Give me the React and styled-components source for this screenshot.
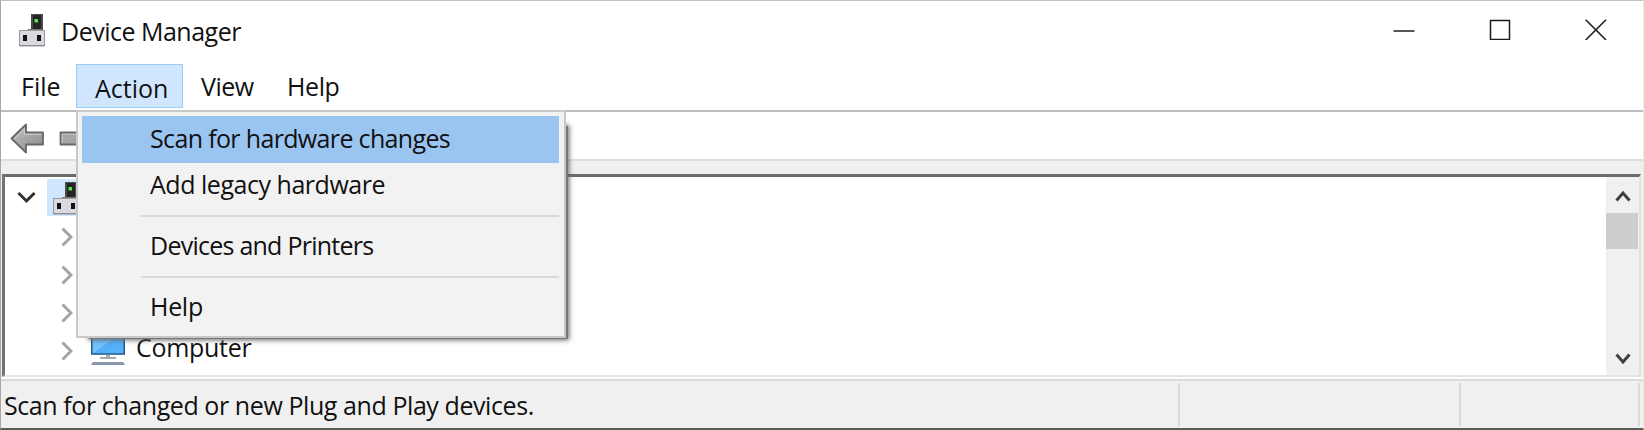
import React from "react";
import styled, { createGlobalStyle, css } from "styled-components";

const GlobalStyle = createGlobalStyle`
  * { box-sizing: border-box; }
  body { margin: 0; background: #fff; font-family: "Open Sans", "Noto Sans", sans-serif; font-size: 25px; color: #111; }
  svg { display: block; flex: none; }
`;

const Label = styled.span`
  display: block;
  white-space: pre;
  line-height: 34px;
  letter-spacing: ${(p) => p.$track || 0}px;
`;

const Window = styled.main`
  position: relative;
  width: 1644px;
  height: 430px;
  display: flex;
  flex-direction: column;
  overflow: hidden;
  border-top: 1px solid #c2c2c2;
  border-left: 1px solid #a6a6a6;
  border-right: 1px solid #ececec;
  border-bottom: 2px solid #5a5a5a;
`;

const TitleBar = styled.header`
  height: 63px;
  flex: none;
  display: flex;
  align-items: flex-start;
  justify-content: space-between;
  padding: 12px 36px 0 17px;
`;

const TitleGroup = styled.div`
  display: flex;
  gap: 15px;
`;

const TitleText = styled.div`
  padding-top: 1px;
`;

const WindowControls = styled.div`
  display: flex;
  gap: 74px;
  padding: 5px 0 0;
`;

const MenuBar = styled.nav`
  height: 46px;
  flex: none;
  display: flex;
  align-items: flex-start;
`;

const MenuBarItem = styled.div`
  width: ${(p) => p.$width}px;
  height: 44px;
  padding: ${(p) => (p.$open ? 6 : 5)}px 0 0 ${(p) => p.$inset}px;
  ${(p) => p.$open && css`
    background: #d0e6ff;
    border: 1px solid #99cdfb;
  `}
`;

const Toolbar = styled.div`
  height: 51px;
  flex: none;
  display: flex;
  align-items: flex-start;
  gap: 14px;
  padding: 11px 0 0 9px;
  border-top: 2px solid #bcbcbe;
  border-bottom: 2px solid #dedede;
`;

const Body = styled.section`
  height: 218px;
  flex: none;
  background: #f0f0f0;
  padding: 13px 2px 0 1px;
  border-bottom: 2px solid #fdfdfd;
`;

const TreePane = styled.div`
  height: 203px;
  display: flex;
  background: #fff;
  border-top: 3px solid #6b6b6b;
  border-left: 3px solid #737373;
  border-right: 2px solid #e2e2e2;
  border-bottom: 2px solid #e4e4e4;
`;

const Tree = styled.div`
  flex: 1;
  padding-top: 1px;
`;

const RootRow = styled.div`
  height: 38px;
  margin-bottom: 2px;
  display: flex;
  align-items: center;
  gap: 11px;
  padding-left: 12px;
`;

const RootSelection = styled.div`
  width: 40px;
  height: 37px;
  background: #cfe6ff;
  padding: 2px 0 0 5px;
`;

const NodeRow = styled.div`
  height: 38px;
  display: flex;
  align-items: center;
  padding-left: 56px;
`;

const NodeIcon = styled.div`
  height: 44px;
  margin: 0 10px 0 17px;
`;

const NodeText = styled.div`
  height: 42px;
`;

const ScrollBar = styled.div`
  width: 33px;
  background: #f0f0f0;
  display: flex;
  flex-direction: column;
  align-items: center;
`;

const ScrollButton = styled.div`
  height: 36px;
  flex: none;
  padding-top: ${(p) => p.$top}px;
`;

const ScrollThumb = styled.div`
  width: 32px;
  height: 36px;
  margin-bottom: auto;
  align-self: flex-start;
  background: #cdcdcd;
`;

const StatusBar = styled.footer`
  flex: 1;
  display: flex;
  background: #f0f0f0;
  border-top: 2px solid #dadada;
  padding: 2px 3px 2px 0;
`;

const StatusPane = styled.div`
  width: ${(p) => p.$width}px;
  padding: 5px 0 0 3px;
  border-right: 2px solid #d9d9d9;
`;

const Dropdown = styled.div`
  position: absolute;
  left: 75px;
  top: 109px;
  width: 490px;
  height: 228px;
  padding: 4px 5px 0 4px;
  background: #f2f2f2;
  border: 2px solid #c8c8c8;
  display: flex;
  flex-direction: column;
`;

const DropdownShadow = styled.div`
  position: absolute;
  left: 88px;
  top: 125px;
  width: 479px;
  height: 213px;
  background: #777;
  box-shadow: 0 0 5px 1px #666;
`;

const DropdownItem = styled.div`
  height: ${(p) => p.$height}px;
  flex: none;
  padding: ${(p) => p.$top}px 0 0 68px;
  ${(p) => p.$selected && css`background: #9bc5f1;`}
`;

const Separator = styled.div`
  height: 2px;
  flex: none;
  margin-left: 59px;
  background: #d8d8d8;
`;

const DeviceIcon = () => (
  <svg width="28" height="34" viewBox="0 0 28 34">
    <rect x="13" y="1" width="12" height="17" fill="#4b4b4b" />
    <rect x="15" y="2" width="8" height="14" fill="#242424" />
    <rect x="16.5" y="6" width="3.5" height="3.5" fill="#54e645" />
    <path d="M10 16H24V18H27V33H1V18H9Z" fill="#d9dadd" />
    <path d="M1.5 17.5H26.5V33H1.5Z" fill="none" stroke="#97999d" />
    <path d="M10 16.5H24" stroke="#777" />
    <path d="M2 32.5H27" stroke="#8c8e92" />
    <rect x="5" y="22" width="4" height="6" fill="#111" />
    <rect x="19" y="22" width="4" height="6" fill="#111" />
  </svg>
);

const BackArrow = () => (
  <svg width="35" height="32" viewBox="0 0 35 32">
    <defs>
      <linearGradient id="arrowFill" x2="1" y2="1">
        <stop stopColor="#c4c4c4" />
        <stop offset="1" stopColor="#888" />
      </linearGradient>
    </defs>
    <path d="M1.5 15.5 16 1.5V9.5H33V21.5H16V29.5Z" fill="url(#arrowFill)" stroke="#686868" strokeWidth="1.8" strokeLinejoin="round" />
    <path d="M4.5 15.5 14.3 6V11.2H31.2" fill="none" stroke="#d0d0d0" strokeWidth="1" />
  </svg>
);

const ForwardArrow = () => (
  <svg width="35" height="32" viewBox="0 0 35 32">
    <path d="M1.5 9.5H19V1.5L33 15.5 19 29.5V21.5H1.5Z" fill="#a5a5a5" stroke="#686868" strokeWidth="1.8" strokeLinejoin="round" />
    <path d="M3.2 19.8V11.2H20" fill="none" stroke="#cacaca" strokeWidth="1" />
  </svg>
);

const MonitorIcon = () => (
  <svg width="36" height="36" viewBox="0 0 36 36">
    <defs>
      <linearGradient id="screen" x2="1" y2="1">
        <stop stopColor="#6fc0fb" />
        <stop offset=".5" stopColor="#72c1fb" />
        <stop offset=".52" stopColor="#51aef8" />
        <stop offset="1" stopColor="#58b4fb" />
      </linearGradient>
    </defs>
    <rect x="1.8" y="1" width="32.4" height="24" fill="url(#screen)" stroke="#285f91" strokeWidth="1.6" />
    <path d="M16 26H20V28H26V30H10V28H16Z" fill="#a2abb5" />
    <path d="M3 33H33L35 36H1Z" fill="#8998ab" />
  </svg>
);

const MinimizeIcon = () => (
  <svg width="22" height="22" viewBox="0 0 22 22"><path d="M.5 13H21.5" stroke="#555" strokeWidth="2" /></svg>
);
const MaximizeIcon = () => (
  <svg width="22" height="22" viewBox="0 0 22 22"><rect x="1.5" y="2.5" width="19" height="19" fill="none" stroke="#1a1a1a" strokeWidth="1.5" /></svg>
);
const CloseIcon = () => (
  <svg width="22" height="22" viewBox="0 0 22 22"><path d="M.7 1.8 21 22M21 1.8.7 22" stroke="#222" strokeWidth="1.6" /></svg>
);

const Chevron = ({ d, width, height, color }) => (
  <svg width={width} height={height} viewBox={`0 0 ${width} ${height}`}>
    <path d={d} fill="none" stroke={color} strokeWidth="3" />
  </svg>
);
const ExpandChevron = () => <Chevron width={12} height={20} d="M1.5 1.5 10 10 1.5 18.5" color="#a4a4a4" />;

export default function App() {
  return (
    <>
      <GlobalStyle />
      <Window>
        <TitleBar>
          <TitleGroup>
            <DeviceIcon />
            <TitleText><Label $track={-0.5}>Device Manager</Label></TitleText>
          </TitleGroup>
          <WindowControls>
            <MinimizeIcon />
            <MaximizeIcon />
            <CloseIcon />
          </WindowControls>
        </TitleBar>
        <MenuBar>
          <MenuBarItem $width={75} $inset={20}><Label>File</Label></MenuBarItem>
          <MenuBarItem $width={107} $inset={18} $open><Label>Action</Label></MenuBarItem>
          <MenuBarItem $width={87} $inset={18}><Label $track={-0.5}>View</Label></MenuBarItem>
          <MenuBarItem $width={90} $inset={17}><Label $track={-0.4}>Help</Label></MenuBarItem>
        </MenuBar>
        <Toolbar>
          <BackArrow />
          <ForwardArrow />
        </Toolbar>
        <Body>
          <TreePane>
            <Tree>
              <RootRow>
                <Chevron width={19} height={13} d="M1.5 2 9.5 10 17.5 2" color="#303030" />
                <RootSelection><DeviceIcon /></RootSelection>
              </RootRow>
              <NodeRow><ExpandChevron /></NodeRow>
              <NodeRow><ExpandChevron /></NodeRow>
              <NodeRow><ExpandChevron /></NodeRow>
              <NodeRow>
                <ExpandChevron />
                <NodeIcon><MonitorIcon /></NodeIcon>
                <NodeText><Label $track={-0.3}>Computer</Label></NodeText>
              </NodeRow>
            </Tree>
            <ScrollBar>
              <ScrollButton $top={12}><Chevron width={16} height={14} d="M1.5 11.5 8 4 14.5 11.5" color="#404040" /></ScrollButton>
              <ScrollThumb />
              <ScrollButton $top={13}><Chevron width={16} height={14} d="M1.5 2.5 8 10 14.5 2.5" color="#404040" /></ScrollButton>
            </ScrollBar>
          </TreePane>
        </Body>
        <StatusBar>
          <StatusPane $width={1179}><Label $track={-0.42}>Scan for changed or new Plug and Play devices.</Label></StatusPane>
          <StatusPane $width={281} />
          <StatusPane $width={179} />
        </StatusBar>
        <DropdownShadow />
        <Dropdown>
          <DropdownItem $height={47} $top={5} $selected><Label $track={-0.65}>Scan for hardware changes</Label></DropdownItem>
          <DropdownItem $height={52} $top={4}><Label $track={-0.47}>Add legacy hardware</Label></DropdownItem>
          <Separator />
          <DropdownItem $height={59} $top={11}><Label $track={-0.75}>Devices and Printers</Label></DropdownItem>
          <Separator />
          <DropdownItem $height={58} $top={11}><Label $track={-0.3}>Help</Label></DropdownItem>
        </Dropdown>
      </Window>
    </>
  );
}
